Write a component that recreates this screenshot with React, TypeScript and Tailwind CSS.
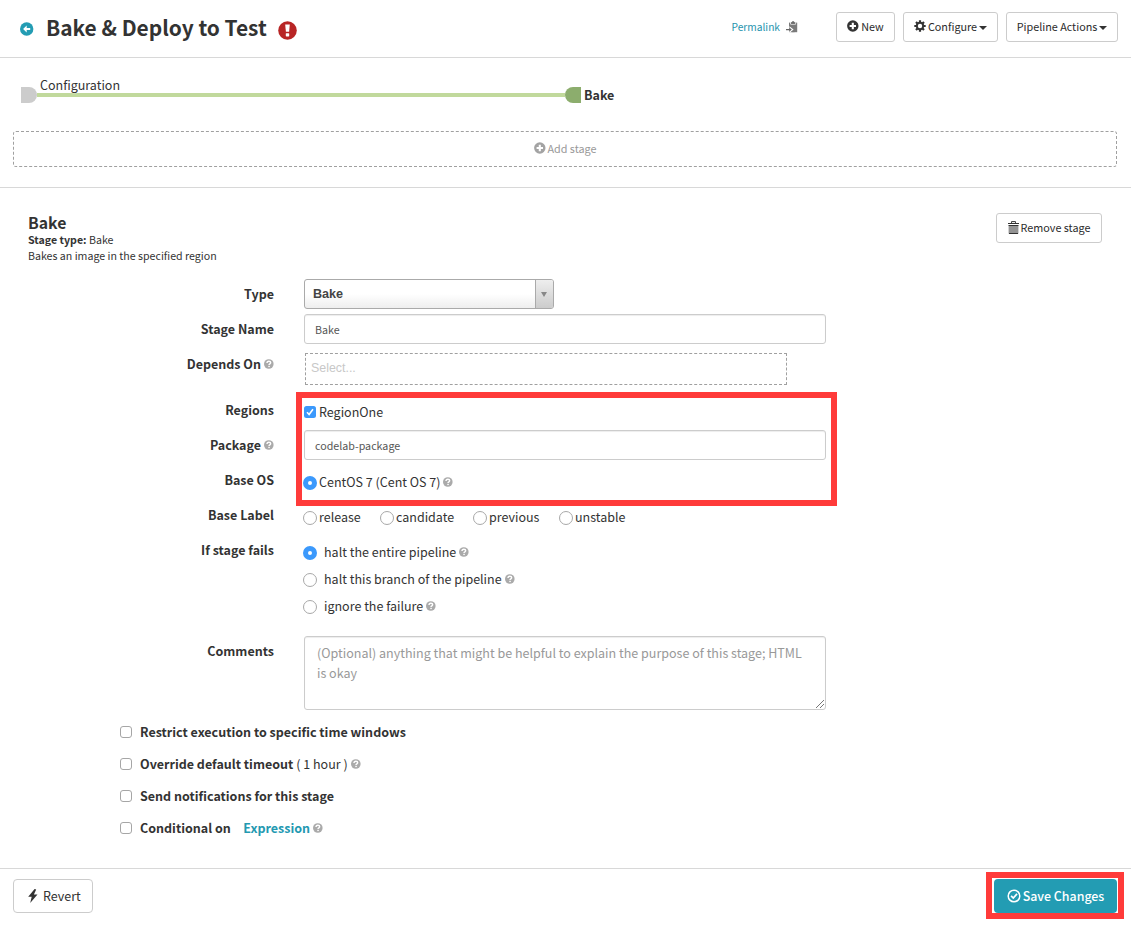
import type { ReactNode } from "react";

const FONT = "font-['Noto_Sans_CJK_SC','Noto_Sans',sans-serif]";

function Help() {
  return (
    <svg className="block size-[10px] shrink-0" viewBox="0 0 10 10" aria-label="Help">
      <circle cx="4.8" cy="5" r="4.8" fill="#aaa" />
      <path d="M3 4.1C3 2.9 3.8 2.3 4.9 2.3S6.7 3 6.7 3.8C6.7 4.9 5 4.9 5 6.1" fill="none" stroke="#fff" strokeWidth="1.4" />
      <rect x="4.3" y="6.8" width="1.5" height="1.3" fill="#fff" />
    </svg>
  );
}

function PlusCircle({ color }: { color: string }) {
  return (
    <svg className="block size-[12px] shrink-0" viewBox="0 0 12 12">
      <circle cx="5.8" cy="6" r="5.7" fill={color} />
      <path d="M5.8 2.8v6.4M2.6 6H9" stroke="#fff" strokeWidth="2.1" />
    </svg>
  );
}

function Gear() {
  return (
    <svg className="block size-[12px] shrink-0" viewBox="0 0 12 12">
      <g stroke="#333" strokeWidth="2.2">
        <path d="M6 .3v11.4M.3 6h11.4M2 2l8 8M10 2l-8 8" />
      </g>
      <circle cx="6" cy="6" r="4.2" fill="#333" />
      <circle cx="6" cy="6" r="2.2" fill="#fff" />
    </svg>
  );
}

function Trash() {
  return (
    <svg className="block h-[13px] w-[11px] shrink-0" viewBox="0 0 11 13">
      <path d="M3.5 1.9V.6h4v1.3" fill="none" stroke="#333" strokeWidth="1" />
      <rect x="0" y="2" width="11" height="1" fill="#333" />
      <path d="M.6 4h9.8v8.2a.8.8 0 0 1-.8.8H1.4a.8.8 0 0 1-.8-.8z" fill="#939393" />
      <path d="M.6 4.5h9.8M1 12.5h9" stroke="#333" strokeWidth="1" />
    </svg>
  );
}

function Paste() {
  return (
    <svg className="block h-[12px] w-[12px] shrink-0" viewBox="0 0 12 12">
      <path d="M3 1.6h8.2v9.6H3z" fill="#7a7a7a" />
      <path d="M4.6 1.2v2h5v-2" fill="none" stroke="#fff" strokeWidth=".8" />
      <path d="M5 2.7V1.3h1.1V.3h2v1h1.1v1.4z" fill="#6a6a6a" />
      <path d="M0 6.9h3.4V5.2l4.2 3.4L3.4 12v-1.6H0z" fill="#fff" />
      <path d="M0 8h3.2V6.5l2.6 2.1-2.6 2.1V9.2H0z" fill="#666" />
      <path d="M5.6 10.7h3" stroke="#7a7a7a" strokeWidth="1" />
    </svg>
  );
}

function Caret() {
  return <span className="mt-[3px] block h-0 w-0 border-x-4 border-t-4 border-x-transparent border-t-[#333]" />;
}

function SmallButton({ width, children }: { width: string; children: ReactNode }) {
  return (
    <button
      className={`flex h-[30px] items-center justify-center rounded-[3px] border border-[#ccc] bg-white pb-[2px] text-[10.8px] leading-[20px] text-[#2b2b2b] whitespace-nowrap ${width}`}
    >
      {children}
    </button>
  );
}

function Radio({ checked = false }: { checked?: boolean }) {
  return checked ? (
    <span className="block size-[14px] shrink-0 rounded-full border-5 border-[#3b99fc] bg-white" />
  ) : (
    <span className="block size-[14px] shrink-0 rounded-full border border-[#a8a8a8] bg-white" />
  );
}

function Checkbox() {
  return <span className="block size-[12px] shrink-0 rounded-[3px] border border-[#a6a6a6] bg-white" />;
}

function Row({ label, help = false, height, children }: { label: string; help?: boolean; height: string; children: ReactNode }) {
  return (
    <div className={`flex items-start ${height}`}>
      <div className="flex h-[30px] w-[274px] shrink-0 items-center justify-end gap-[3px] text-[12.5px] font-bold leading-[30px]">
        <span>{label}</span>
        {help && <Help />}
      </div>
      <div className="ml-[30px]">{children}</div>
    </div>
  );
}

function TextBox({ value }: { value: string }) {
  return (
    <div className="h-[30px] w-[522px] rounded-[3px] border border-[#ccc] px-[10px] text-[10.7px] leading-[29px] text-[#555] shadow-[inset_0_1px_1px_rgba(0,0,0,0.075)]">
      {value}
    </div>
  );
}

function LabelOption({ text, width }: { text: string; width: string }) {
  return (
    <div className={`flex items-center gap-[2px] ${width}`}>
      <Radio />
      <span className="pb-[2px]">{text}</span>
    </div>
  );
}

function FailOption({ text, checked }: { text: string; checked?: boolean }) {
  return (
    <div className="flex h-[27px] items-center">
      <Radio checked={checked} />
      <span className="ml-[7px] mr-[3px] pb-[2px]">{text}</span>
      <span className="pb-[2px]"><Help /></span>
    </div>
  );
}

function CheckRow({ children }: { children: ReactNode }) {
  return (
    <div className="flex h-8 items-center">
      <Checkbox />
      <div className="ml-2 flex items-center font-bold">{children}</div>
    </div>
  );
}

export default function App() {
  return (
    <div className={`flex h-[928px] w-[1131px] flex-col overflow-hidden bg-white text-[12.5px] leading-[20px] text-[#333] ${FONT}`}>
      <header className="flex h-[58px] shrink-0 items-center border-b border-[#d8d8d8] pl-5 pr-[13px] pb-[3px]">
        <svg className="mt-[3px] block size-[14px]" viewBox="0 0 14 14">
          <circle cx="6.7" cy="7" r="6.7" fill="#239cb3" />
          <path d="M6.7 3.6v2.3h3.5v2.2H6.7v2.3L3.1 7z" fill="#fff" />
        </svg>
        <h1 className="ml-[12px] text-[20.9px] font-bold leading-[30px]">Bake &amp; Deploy to Test</h1>
        <svg className="ml-[11px] mt-[6px] block size-[19px]" viewBox="0 0 19 19">
          <circle cx="9.5" cy="9.5" r="9.3" fill="#b82525" />
          <path d="M7.2 3.4h4.6l-.7 7.4H7.9z" fill="#fff" />
          <rect x="7.8" y="12.2" width="3.4" height="3.2" rx=".6" fill="#fff" />
        </svg>
        <div className="ml-auto flex items-center">
          <a className="text-[10.2px] text-[#2593ad]">Permalink</a>
          <span className="ml-[6px] mr-[38px]"><Paste /></span>
          <div className="flex gap-2">
            <SmallButton width="w-[59px]">
              <PlusCircle color="#333" />
              <span className="ml-[2px]">New</span>
            </SmallButton>
            <SmallButton width="w-[95px]">
              <Gear />
              <span className="ml-[2px] mr-[2px]">Configure</span>
              <Caret />
            </SmallButton>
            <SmallButton width="w-[112px]">
              <span className="mr-[2px]">Pipeline Actions</span>
              <Caret />
            </SmallButton>
          </div>
        </div>
      </header>

      <section className="h-[130px] shrink-0 border-b border-[#d8d8d8] px-[13px] pt-[29px]">
        <div className="flex h-4 items-center pl-2">
          <span className="h-4 w-4 rounded-r-[8px] bg-[#ccc]" />
          <div className="relative h-1 w-[528px] bg-[#c1d99c]">
            <span className="absolute bottom-[3px] left-[3px] leading-[18px] [text-shadow:0_0_2px_#fff]">Configuration</span>
          </div>
          <span className="h-4 w-4 rounded-l-[8px] bg-[#8cad6d]" />
          <span className="ml-[3px] font-bold">Bake</span>
        </div>
        <div className="mt-7 flex h-9 w-[1104px] items-center justify-center gap-[2px] rounded-[3px] border border-dashed border-[#a0a0a0] pb-[2px] text-[10.8px] text-[#999]">
          <PlusCircle color="#a3a3a3" />
          <span>Add stage</span>
        </div>
      </section>

      <main className="h-[681px] shrink-0 border-b border-[#d8d8d8] pt-[25px]">
        <div className="flex h-[66px] justify-between pl-7 pr-[29px]">
          <div className="text-[10.63px] leading-4">
            <h2 className="text-[15.8px] font-bold leading-[19px]">Bake</h2>
            <p><b>Stage type:</b> Bake</p>
            <p>Bakes an image in the specified region</p>
          </div>
          <SmallButton width="w-[106px]">
            <Trash />
            <span className="ml-[2px]">Remove stage</span>
          </SmallButton>
        </div>

        <Row label="Type" height="h-[35px]">
          <div className="flex h-[30px] w-[250px] overflow-hidden rounded-[3px] border border-[#aaa] bg-linear-to-b from-white from-50% to-[#eee] font-['Liberation_Sans',sans-serif] text-[12.6px] font-bold leading-[28px] text-[#444]">
            <span className="flex-1 pl-2">Bake</span>
            <span className="flex w-[18px] items-center justify-center border-l border-[#aaa] bg-linear-to-b from-[#eee] to-[#ccc] pr-px">
              <span className="h-0 w-0 border-x-[3px] border-t-[5px] border-x-transparent border-t-[#888]" />
            </span>
          </div>
        </Row>
        <Row label="Stage Name" height="h-[35px]">
          <TextBox value="Bake" />
        </Row>
        <Row label="Depends On" help height="h-[46px]">
          <div className="ml-px mt-1 h-8 w-[482px] border border-dashed border-[#a0a0a0] pl-[5px] font-['Liberation_Sans',sans-serif] text-[12.4px] leading-[29px] text-[#c8c8c8]">
            Select...
          </div>
        </Row>

        <div className="relative">
          <Row label="Regions" height="h-[35px]">
            <div className="flex h-[33px] items-center gap-[3px]">
              <svg className="block size-[12px]" viewBox="0 0 12 12">
                <rect width="12" height="12" rx="2.5" fill="#3b99fc" />
                <path d="M3 6.3l2.1 2.2L9 3.2" fill="none" stroke="#fff" strokeWidth="1.6" />
              </svg>
              <span>RegionOne</span>
            </div>
          </Row>
          <Row label="Package" help height="h-[35px]">
            <TextBox value="codelab-package" />
          </Row>
          <Row label="Base OS" height="h-[35px]">
            <div className="-ml-px flex h-[35px] items-center">
              <Radio checked />
              <span className="ml-[2px] mr-[3px] pb-[2px]">CentOS 7 (Cent OS 7)</span>
              <span className="pb-[2px]"><Help /></span>
            </div>
          </Row>
          <div className="pointer-events-none absolute -top-[3px] left-[296px] h-[114px] w-[541px] border-6 border-[#ff3b3a]" />
        </div>

        <Row label="Base Label" height="h-[35px]">
          <div className="-ml-px flex h-[35px] items-center">
            <LabelOption text="release" width="w-[77px]" />
            <LabelOption text="candidate" width="w-[93px]" />
            <LabelOption text="previous" width="w-[86px]" />
            <LabelOption text="unstable" width="w-[80px]" />
          </div>
        </Row>
        <Row label="If stage fails" height="h-[101px]">
          <div className="-ml-px pt-1">
            <FailOption text="halt the entire pipeline" checked />
            <FailOption text="halt this branch of the pipeline" />
            <FailOption text="ignore the failure" />
          </div>
        </Row>
        <Row label="Comments" height="h-[80px]">
          <div className="relative h-[74px] w-[522px] rounded-[3px] border border-[#ccc] px-3 pt-[6px] text-[12.53px] text-[#999] shadow-[inset_0_1px_1px_rgba(0,0,0,0.075)]">
            (Optional) anything that might be helpful to explain the purpose of this stage; HTML<br />is okay
            <svg className="absolute bottom-0 right-0 size-[10px]" viewBox="0 0 10 10">
              <path d="M1 9L9 1M5 9l4-4" stroke="#777" strokeWidth="1" />
            </svg>
          </div>
        </Row>

        <div className="pl-[120px]">
          <CheckRow>Restrict execution to specific time windows</CheckRow>
          <CheckRow>
            <span>Override default timeout</span>
            <span className="ml-[3px] mr-[3px] font-normal">( 1 hour )</span>
            <Help />
          </CheckRow>
          <CheckRow>Send notifications for this stage</CheckRow>
          <CheckRow>
            <span>Conditional on</span>
            <a className="ml-[12.5px] mr-[3px] text-[#2399b1]">Expression</a>
            <Help />
          </CheckRow>
        </div>
      </main>

      <footer className="flex items-start justify-between pl-[13px] pr-[7px] pt-[3px]">
        <button className="mt-[7px] flex h-[34px] w-20 items-center rounded-[4px] border border-[#ccc] pl-[14px]">
          <svg className="block h-[14px] w-[10px]" viewBox="0 0 10 14">
            <path d="M6.6 0L.2 7.7h3.5L2.2 14l7.3-8.4H5.9L8.2.4z" fill="#333" />
          </svg>
          <span className="ml-[5px]">Revert</span>
        </button>
        <div className="h-[47px] w-[138px] border-6 border-[#ff3b3a] pl-[2px] pt-px">
          <button className="flex h-[34px] w-[123px] items-center justify-center gap-[2px] rounded-[4px] bg-[#239cb3] text-white">
            <svg className="block size-[14px]" viewBox="0 0 14 14">
              <circle cx="7" cy="7" r="5.8" fill="none" stroke="#fff" strokeWidth="1.5" />
              <path d="M4.1 6.8l2.2 2.3L10 4.9" fill="none" stroke="#fff" strokeWidth="1.7" />
            </svg>
            <span className="text-[12.4px] font-medium">Save Changes</span>
          </button>
        </div>
      </footer>
    </div>
  );
}
